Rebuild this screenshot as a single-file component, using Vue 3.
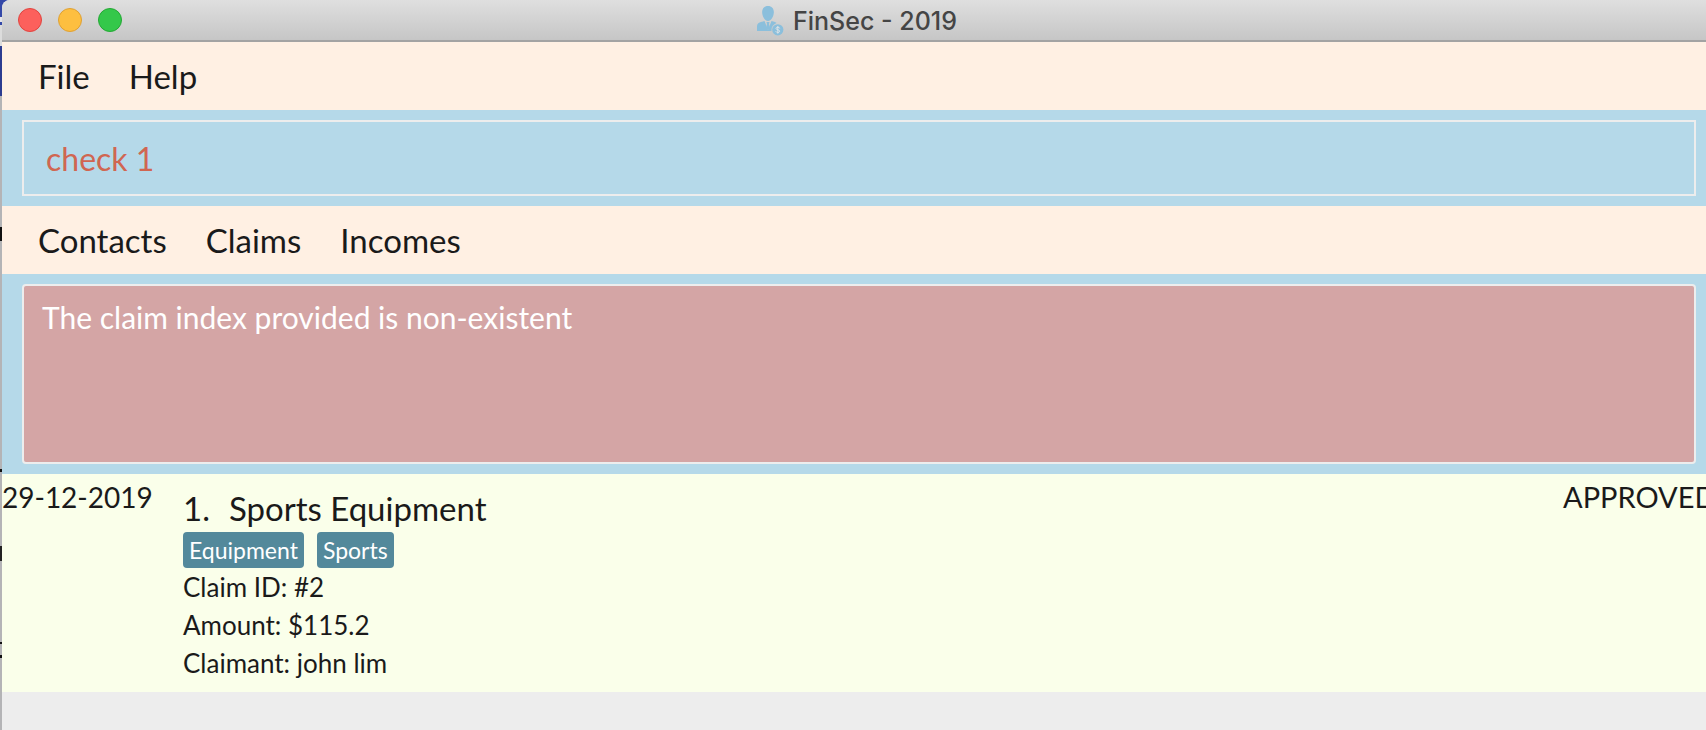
<script setup>
import { ref } from 'vue'

const command = ref('check 1')
const feedback = ref('The claim index provided is non-existent')
const windowControls = ['close', 'minimise', 'zoom']
const menus = ['File', 'Help']
const views = ['Contacts', 'Claims', 'Incomes']
const claims = [
  {
    date: '29-12-2019',
    index: 1,
    description: 'Sports Equipment',
    tags: ['Equipment', 'Sports'],
    id: 2,
    amount: '115.2',
    claimant: 'john lim',
    status: 'APPROVED'
  }
]
</script>

<template>
  <div class="desktop">
    <div class="window">
      <header class="titlebar">
        <div class="controls">
          <button
            v-for="control in windowControls"
            :key="control"
            type="button"
            class="control"
            :class="control"
            :aria-label="control"
          ></button>
        </div>
        <h1 class="title">
          <svg class="logo" viewBox="0 0 28 30" aria-hidden="true">
            <path d="M11 0C15 0 17.200 3 16.800 7C16.400 11 14 15 11 15C8 15 5.600 11 5.200 7C4.800 3 7 0 11 0Z" />
            <path d="M0 25V20C0 17.500 2 16.600 4 16L7.500 15L11 24L14.500 15L18 16L19.500 17C16 18.500 14 21.500 14.500 25Z" />
            <path d="M9.500 16H12.500L12 18L13 22L11 24L9 22L10 18Z" />
            <circle cx="20.800" cy="23.800" r="5.600" />
            <path
              class="coin"
              d="M22.800 22.300C22.300 20.800 18.900 20.900 19 22.500C19.100 24.300 22.700 23.400 22.700 25.200C22.700 26.900 19.200 26.800 18.700 25.300M20.800 20V27.600"
            />
          </svg>
          <span>FinSec - 2019</span>
        </h1>
      </header>

      <nav class="menubar" aria-label="Application">
        <button v-for="menu in menus" :key="menu" type="button" class="menu">{{ menu }}</button>
      </nav>

      <div class="pane">
        <input v-model="command" class="command" type="text" aria-label="Command" spellcheck="false" />
      </div>

      <nav class="menubar" aria-label="Views">
        <button v-for="view in views" :key="view" type="button" class="menu">{{ view }}</button>
      </nav>

      <div class="pane">
        <textarea v-model="feedback" class="feedback" readonly aria-label="Result"></textarea>
      </div>

      <main>
        <article v-for="claim in claims" :key="claim.id" class="claim">
          <time class="date">{{ claim.date }}</time>
          <div class="details">
            <h2 class="name">
              <span>{{ claim.index }}.</span>
              <span>{{ claim.description }}</span>
            </h2>
            <div class="tags">
              <span v-for="tag in claim.tags" :key="tag" class="tag">{{ tag }}</span>
            </div>
            <p class="line">Claim ID: #{{ claim.id }}</p>
            <p class="line">Amount: ${{ claim.amount }}</p>
            <p class="line">Claimant: {{ claim.claimant }}</p>
          </div>
          <div class="status">{{ claim.status }}</div>
        </article>
      </main>
    </div>
  </div>
</template>

<style>
body {
  margin: 0;
  background: #ededed;
}
</style>

<style scoped>
.desktop {
  box-sizing: border-box;
  min-height: 100vh;
  padding-left: 2px;
  overflow: hidden;
  display: flex;
  background: linear-gradient(
    #3448a8 0 17px,
    #e4e4ea 17px 22px,
    #3448a8 22px 25px,
    #dcdcdc 25px 46px,
    #2c3c90 46px 96px,
    #b4b4b6 96px 227px,
    #111 227px 241px,
    #b4b4b6 241px 469px,
    #111 469px 472px,
    #b4b4b6 472px 546px,
    #222 546px 561px,
    #b4b4b6 561px 642px,
    #111 642px 644px,
    #b4b4b6 644px 655px,
    #111 655px 658px,
    #b4b4b6 658px
  );
  font-family: Lato, "Liberation Sans", sans-serif;
  color: #1a1a1a;
}

.window {
  flex: 1;
  min-width: 0;
  background: #ededed;
  border-top-left-radius: 8px;
  overflow: hidden;
}

.titlebar {
  box-sizing: border-box;
  height: 42px;
  padding: 0 10px 0 16px;
  display: grid;
  grid-template-columns: 1fr auto 1fr;
  align-items: center;
  background: linear-gradient(#dfdfdf, #c6c6c6);
  border-bottom: 2px solid #a3a3a3;
}

.controls {
  display: flex;
  gap: 16px;
}

.control {
  box-sizing: border-box;
  width: 24px;
  height: 24px;
  padding: 0;
  border: 1px solid;
  border-radius: 50%;
}

.close {
  background: #fc605c;
  border-color: #e0443f;
}

.minimise {
  background: #fdbf40;
  border-color: #dea034;
}

.zoom {
  background: #34c84a;
  border-color: #24a834;
}

.title {
  margin: 0;
  padding-top: 1px;
  display: flex;
  align-items: center;
  gap: 8px;
  font: 500 25px/32px Inter, "Liberation Sans", sans-serif;
  color: #454545;
}

.logo {
  width: 28px;
  height: 30px;
  fill: #8bbfdc;
}

.coin {
  fill: none;
  stroke: #dde3e6;
  stroke-width: 1;
}

.menubar {
  display: flex;
  gap: 39px;
  padding: 14px 36px;
  background: #fff0e3;
}

.menu {
  padding: 0;
  border: 0;
  background: none;
  font: inherit;
  font-size: 33px;
  line-height: 40px;
  color: inherit;
}

.pane {
  display: flex;
  padding: 10px 10px 10px 20px;
  background: #b5d9e9;
}

.command,
.feedback {
  box-sizing: border-box;
  flex: 1;
  min-width: 0;
  border: 2px solid #ededed;
  font: inherit;
  outline: none;
}

.command {
  height: 76px;
  padding: 0 22px;
  background: transparent;
  font-size: 32px;
  color: #d06651;
}

.feedback {
  height: 180px;
  padding: 13px 18px;
  border-radius: 4px;
  background: #d4a5a5;
  font-size: 30px;
  line-height: 36px;
  color: #fff;
  resize: none;
}

.claim {
  display: grid;
  grid-template-columns: 181px 1fr 143px;
  padding-bottom: 10px;
  background: #faffea;
}

.date,
.status {
  padding-top: 5px;
  font-size: 28px;
  line-height: 36px;
  white-space: nowrap;
}

.status {
  font-size: 29px;
}

.name {
  margin: 0;
  padding-top: 14px;
  display: flex;
  gap: 19px;
  font-size: 33px;
  line-height: 40px;
  font-weight: 400;
}

.tags {
  display: flex;
  gap: 13px;
  padding-top: 4px;
}

.tag {
  padding: 2px 6px;
  border-radius: 4px;
  background: #53899b;
  font-size: 23px;
  line-height: 32px;
  color: #fff;
}

.line {
  margin: 0;
  font-size: 26px;
  line-height: 38px;
}
</style>
